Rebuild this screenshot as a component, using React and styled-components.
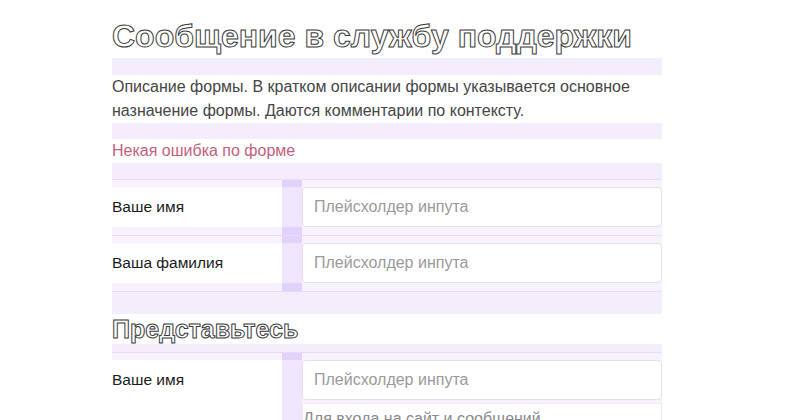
import React from 'react';
import styled, { createGlobalStyle } from 'styled-components';

const Global = createGlobalStyle`
  html, body { margin: 0; padding: 0; background: #ffffff; }
  body { font-family: "Liberation Sans", Arial, sans-serif; }
  * { box-sizing: border-box; }
`;

const Page = styled.div`
  width: 550px;
  margin-left: 112px;
  padding-top: 14px;
`;

const Column = styled.div`
  background: #f4eefc;
  display: flex;
  flex-direction: column;
`;

const outline = `
  color: #ffffff;
  -webkit-text-stroke: 1px #3a3a3a;
`;

const Title = styled.h1`
  margin: 0;
  background: #ffffff;
  font-size: 32px;
  line-height: 44px;
  font-weight: 700;
  white-space: nowrap;
  ${outline}
`;

const SubTitle = styled.h2`
  margin: ${(p) => p.$top}px 0 8px;
  background: #ffffff;
  font-size: 25px;
  line-height: 30px;
  font-weight: 700;
  ${outline}
`;

const Description = styled.p`
  margin: 17px 0 0;
  background: #ffffff;
  font-size: 16px;
  line-height: 24px;
  color: #454545;
`;

const ErrorText = styled.p`
  margin: 16px 0 16px;
  background: #ffffff;
  font-size: 16px;
  line-height: 24px;
  color: #c25f7c;
`;

const Row = styled.div`
  display: grid;
  grid-template-columns: 170px 20px 360px;
  border-top: 1px solid #e6dbf9;
  background: #f7f2fe;
`;

const LabelCell = styled.div`
  background: #ffffff;
  margin: 7px 0 8px;
  display: flex;
  align-items: flex-start;
`;

const Label = styled.span`
  height: 40px;
  display: flex;
  align-items: center;
  font-size: 15.5px;
  color: #1a1a1a;
`;

const Gap = styled.div`
  display: flex;
  flex-direction: column;
  background: #efe6fd;
`;

const GapCap = styled.div`
  height: ${(p) => p.$h}px;
  background: #e0d2fb;
  flex: none;
`;

const GapFill = styled.div`
  flex: 1;
`;

const Field = styled.div`
  padding: 7px 0 8px;
  display: flex;
  flex-direction: column;
`;

const Input = styled.input`
  height: 40px;
  width: 100%;
  border: 1px solid #e4dfea;
  border-radius: 4px;
  background: #ffffff;
  padding: 0 11px;
  font-family: "Liberation Sans", Arial, sans-serif;
  font-size: 16px;
  color: #222;
  outline: none;
  &::placeholder { color: #9a9a9a; }
`;

const Hint = styled.div`
  margin-top: 3px;
  background: #ffffff;
  border: 1px solid #f0eaf8;
  padding: 5px 0 4px;
  font-size: 16px;
  line-height: 20px;
  color: #8a8a8a;
`;

const Spacer = styled.div`
  height: ${(p) => p.$h}px;
  border-top: 1px solid #e6dbf9;
`;

function FormRow({ label, hint }) {
  return (
    <Row>
      <LabelCell>
        <Label>{label}</Label>
      </LabelCell>
      <Gap>
        <GapCap $h={7} />
        <GapFill />
        {!hint && <GapCap $h={8} />}
      </Gap>
      <Field>
        <Input placeholder="Плейсхолдер инпута" />
        {hint && <Hint>{hint}</Hint>}
      </Field>
    </Row>
  );
}

export default function App() {
  return (
    <>
      <Global />
      <Page>
        <Column>
          <Title>Сообщение в службу поддержки</Title>
          <Description>
            Описание формы. В кратком описании формы указывается основное назначение формы. Даются комментарии по контексту.
          </Description>
          <ErrorText>Некая ошибка по форме</ErrorText>
          <FormRow label="Ваше имя" />
          <FormRow label="Ваша фамилия" />
          <Spacer $h={0} />
          <SubTitle $top={22}>Представьтесь</SubTitle>
          <FormRow label="Ваше имя" hint="Для входа на сайт и сообщений" />
        </Column>
      </Page>
    </>
  );
}
